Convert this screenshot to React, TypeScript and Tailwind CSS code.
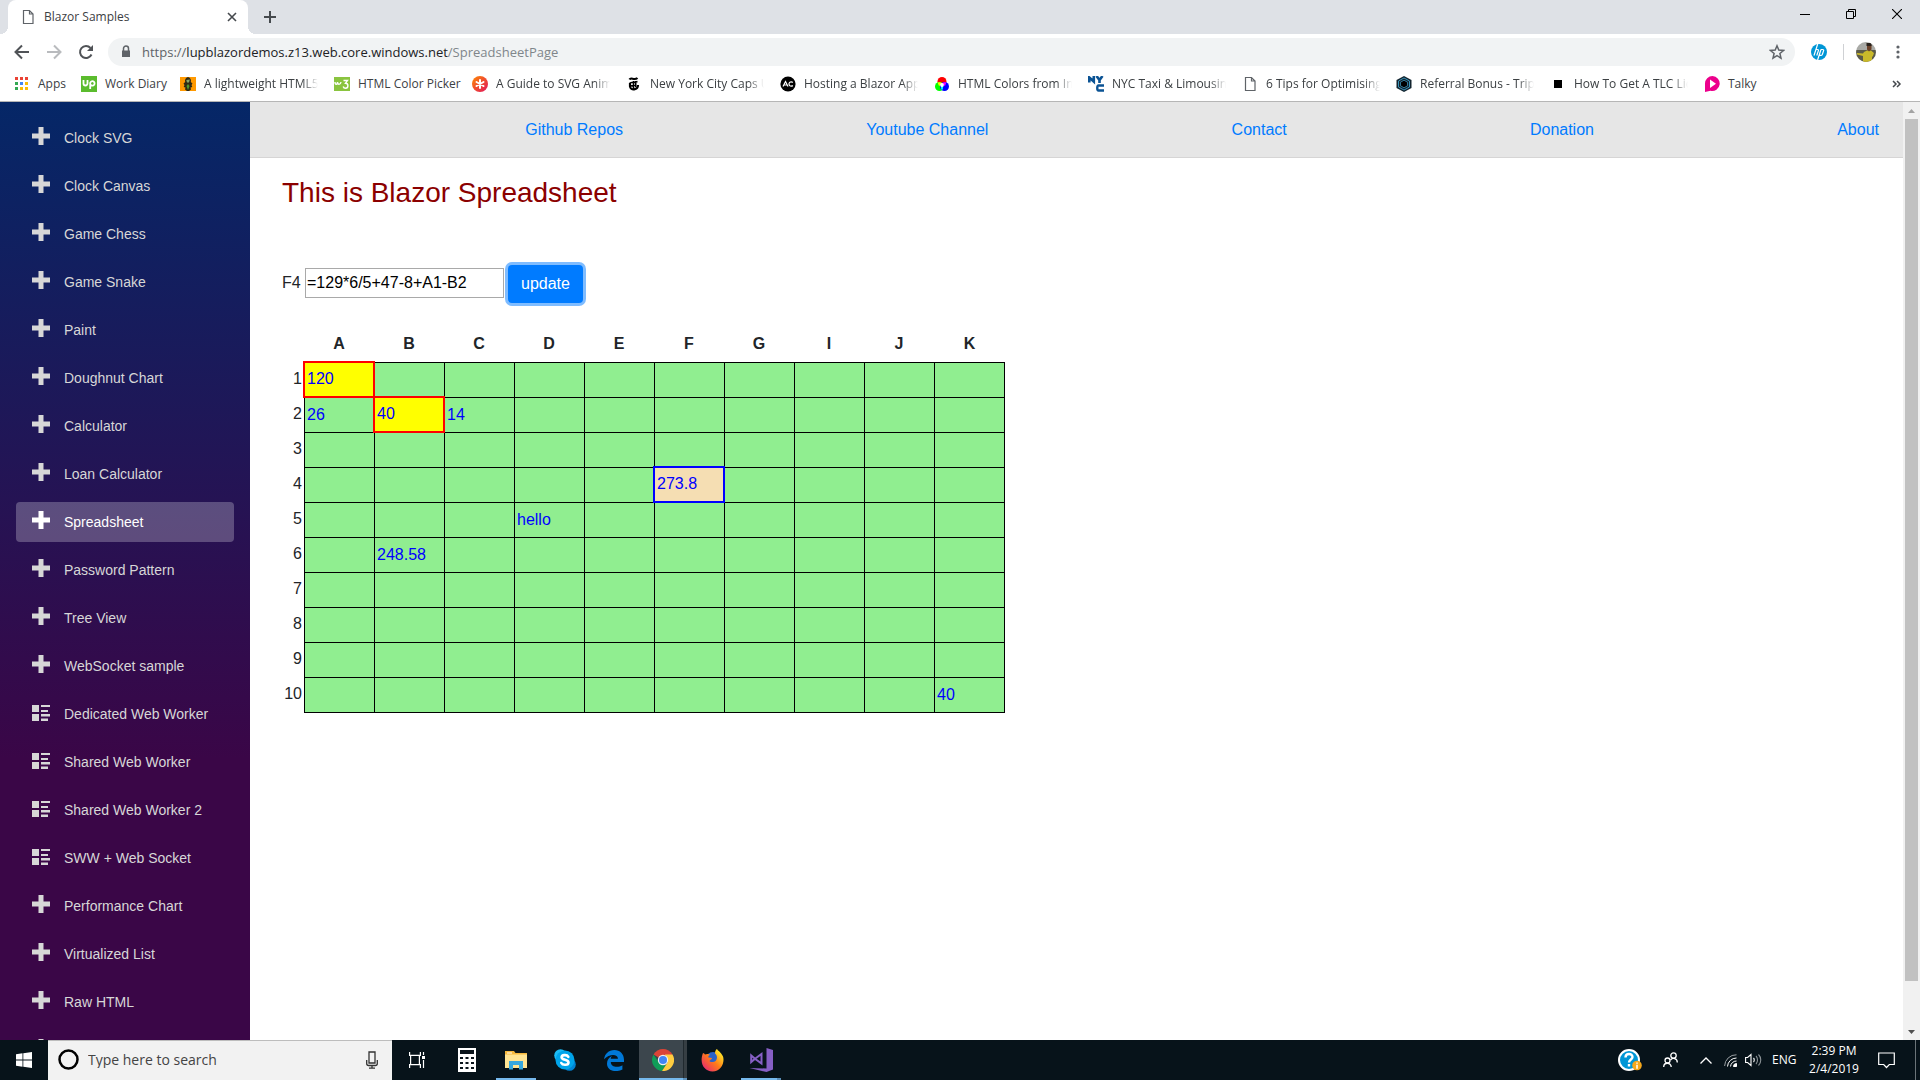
import React from "react";

const plusItems = (names: string[]) => names.map((name) => ({ name, icon: "plus" }));
const listItems = (names: string[]) => names.map((name) => ({ name, icon: "list" }));

const navItems = [
  ...plusItems([
    "Clock SVG", "Clock Canvas", "Game Chess", "Game Snake", "Paint", "Doughnut Chart", "Calculator",
    "Loan Calculator", "Spreadsheet", "Password Pattern", "Tree View", "WebSocket sample",
  ]),
  ...listItems(["Dedicated Web Worker", "Shared Web Worker", "Shared Web Worker 2", "SWW + Web Socket"]),
  ...plusItems(["Performance Chart", "Virtualized List", "Raw HTML", ""]),
];

const PageIcon = () => (
  <svg width="16" height="16" viewBox="0 0 16 16" fill="none" stroke="#5f6368" strokeWidth="1.200">
    <path d="M3.500 1.500h6l3.500 3.500v9.500h-9.500zM9.500 1.500v3.500h3.500" />
  </svg>
);

const bookmarks: { label: string; width: string; icon: React.ReactNode; fade?: boolean }[] = [
  {
    label: "Apps",
    width: "w-[67px]",
    icon: (
      <svg width="16" height="16" viewBox="0 0 16 16">
        <path fill="#ea4335" d="M1 1h3v3H1zM6 1h3v3H6zM11 1h3v3h-3z" />
        <path fill="#34a853" d="M1 6h3v3H1zM1 11h3v3H1z" />
        <path fill="#4285f4" d="M6 6h3v3H6z" />
        <path fill="#fbbc05" d="M11 6h3v3h-3zM6 11h3v3H6zM11 11h3v3h-3z" />
      </svg>
    ),
  },
  {
    label: "Work Diary",
    width: "w-[99px]",
    icon: (
      <svg width="16" height="16" viewBox="0 0 16 16">
        <path fill="#5bbc2e" d="M0 0h16v16H0z" />
        <path fill="none" stroke="#fff" strokeWidth="1.800" d="M2.500 4v3.500a2 2 0 0 0 4 0V4M9.200 13V7a2.200 2.200 0 1 1 .5 1.800" />
      </svg>
    ),
  },
  {
    label: "A lightweight HTML5",
    width: "w-[154px]",
    fade: true,
    icon: (
      <svg width="16" height="16" viewBox="0 0 16 16">
        <path fill="#f90" d="M0 1h16v14H0z" />
        <path fill="#2f2a14" d="M8 1c2.500.5 3.500 3 2.800 5l1.700 1.500-1 1.500.8 2-1.800.5.500 2L9 15H7l-2-1.500.5-2-1.800-.5.800-2-1-1.500L5.200 6C4.500 4 5.500 1.500 8 1z" />
        <path fill="#8aa86a" d="M6.300 4L9.800 3.500 9 6.500H7z" />
        <path fill="#4f9a2f" d="M8 8l1.500 2L8 14l-1.500-4z" />
      </svg>
    ),
  },
  {
    label: "HTML Color Picker",
    width: "w-[138px]",
    icon: (
      <svg width="16" height="16" viewBox="0 0 16 16">
        <path fill="#8ac43f" d="M0 1h16v14H0z" />
        <path fill="none" stroke="#fff" strokeWidth="1.400" d="M1 6c0 3 2.500 3 2.500 0 0 3 3 3 3.500 0M9.500 4.500h4l-2 2.700c3.200 0 3.200 5 0 5-1.200 0-2-.6-2.300-1.700" />
      </svg>
    ),
  },
  {
    label: "A Guide to SVG Anim",
    width: "w-[154px]",
    fade: true,
    icon: (
      <svg width="16" height="16" viewBox="0 0 16 16">
        <defs>
          <linearGradient id="css" x1="0" x2="1" y2="1"><stop stopColor="#ff8a00" /><stop offset="1" stopColor="#e0115f" /></linearGradient>
        </defs>
        <circle cx="8" cy="8" r="8" fill="url(#css)" />
        <path stroke="#fff" strokeWidth="2" strokeLinecap="round" d="M8 4v8M4.500 6l7 4M11.500 6l-7 4" />
      </svg>
    ),
  },
  {
    label: "New York City Caps U",
    width: "w-[154px]",
    fade: true,
    icon: (
      <svg width="16" height="16" viewBox="0 0 16 16" fill="none" stroke="#000">
        <path strokeWidth="2.200" d="M3.500 3.500C5 .5 8 5 11.500 2M12 9c0 5-7.500 6-8 1.500V7" />
        <path strokeWidth="1.600" d="M3.500 7.500c2-2 4.500-.5 8-2M7.500 5v8M9.700 5v6M5 10l5-1.500" />
      </svg>
    ),
  },
  {
    label: "Hosting a Blazor App",
    width: "w-[154px]",
    fade: true,
    icon: (
      <svg width="16" height="16" viewBox="0 0 16 16">
        <circle cx="8" cy="8" r="7.600" />
        <path fill="none" stroke="#fff" strokeWidth="1.200" d="M3 10.500L5.500 5.500 8 10.500M4 9h3M12.800 6.500a2.200 2.200 0 1 0 0 3" />
      </svg>
    ),
  },
  {
    label: "HTML Colors from Im",
    width: "w-[154px]",
    fade: true,
    icon: (
      <svg width="16" height="16" viewBox="0 0 16 16">
        <circle cx="8" cy="5.500" r="4.500" fill="#f00" />
        <circle cx="5.500" cy="10.500" r="4.500" fill="#0f0" />
        <circle cx="10.500" cy="10.500" r="4.500" fill="#00f" />
        <path fill="#ff0" d="M3.700 6.500A4.500 4.500 0 0 1 8 7v1L5 10z" />
        <path fill="#f0f" d="M12.300 6.500A4.500 4.500 0 0 0 8 7v1l3 2z" />
        <path fill="#0ff" d="M8 14.200a4.500 4.500 0 0 1 0-5.500 4.500 4.500 0 0 1 0 5.500z" />
        <circle cx="8" cy="9" r="1.900" fill="#fff" />
      </svg>
    ),
  },
  {
    label: "NYC Taxi & Limousine",
    width: "w-[154px]",
    fade: true,
    icon: (
      <svg width="16" height="16" viewBox="0 0 16 16" fill="none" stroke="#0b5394" strokeWidth="2.600">
        <path d="M1.300 6.500V1.500L5.800 5.500V0M8.500 0l3 4 3-4M11.500 3v4M16 9.500h-5.500c-1.500 0-1.500 5 0 5H16" />
      </svg>
    ),
  },
  { label: "6 Tips for Optimising", width: "w-[154px]", fade: true, icon: <PageIcon /> },
  {
    label: "Referral Bonus - Triple",
    width: "w-[154px]",
    fade: true,
    icon: (
      <svg width="16" height="16" viewBox="0 0 16 16">
        <path fill="#12242f" d="M8 0l7.500 4v8L8 16 .5 12V4z" />
        <path fill="none" stroke="#3a93b8" d="M8 2l5.500 3v6L8 14l-5.500-3V5z" />
        <path fill="#000" stroke="#3a93b8" strokeWidth=".8" d="M8 4.200l3.500 2v3.600L8 11.800l-3.500-2V6.200z" />
      </svg>
    ),
  },
  {
    label: "How To Get A TLC Lic",
    width: "w-[154px]",
    fade: true,
    icon: <svg width="16" height="16" viewBox="0 0 16 16"><path d="M4 4h8v8H4z" /></svg>,
  },
  {
    label: "Talky",
    width: "w-[70px]",
    icon: (
      <svg width="16" height="16" viewBox="0 0 16 16">
        <path fill="#ec008c" d="M8.500 0a7.500 7.500 0 1 1-2 14.800L1 16V7.500A7.500 7.500 0 0 1 8.500 0z" />
        <path fill="#fff" d="M6 3.500l6 4.300-6 4.300z" />
      </svg>
    ),
  },
];

const columns = ["A", "B", "C", "D", "E", "F", "G", "I", "J", "K"];
const rows = [1, 2, 3, 4, 5, 6, 7, 8, 9, 10];
const values: Record<string, string> = {
  A1: "120", A2: "26", B2: "40", C2: "14", F4: "273.8", D5: "hello", B6: "248.58", K10: "40",
};
const marks: Record<string, string> = {
  A1: "border-[#ff0000] bg-[#ffff00]",
  B2: "border-[#ff0000] bg-[#ffff00]",
  F4: "border-[#0000ff] bg-[#f5deb3]",
};

function TabStrip() {
  return (
    <div className="flex h-[34px] shrink-0 bg-[#dee1e6] pl-2">
      <div className="relative flex w-60 items-center rounded-t-lg bg-white pr-2 pl-3">
        <span className="absolute bottom-0 -left-2 size-2 bg-[radial-gradient(circle_at_0_0,#dee1e6_8px,#fff_8px)]" />
        <span className="absolute -right-2 bottom-0 size-2 bg-[radial-gradient(circle_at_100%_0,#dee1e6_8px,#fff_8px)]" />
        <PageIcon />
        <span className="ml-2 grow text-[#3c4043]">Blazor Samples</span>
        <button aria-label="Close tab" className="grid size-4 place-items-center">
          <svg width="10" height="10" viewBox="0 0 10 10" stroke="#45494d" strokeWidth="1.600"><path d="M1 1l8 8M9 1l-8 8" /></svg>
        </button>
      </div>
      <button aria-label="New tab" className="ml-4 self-center">
        <svg width="12" height="12" viewBox="0 0 12 12" stroke="#45494d" strokeWidth="2"><path d="M6 0v12M0 6h12" /></svg>
      </button>
      <div className="ml-auto flex h-7">
        <button aria-label="Minimize" className="grid w-[46px] place-items-center">
          <svg width="10" height="10" viewBox="0 0 10 10" stroke="#000"><path d="M0 5.500h10" /></svg>
        </button>
        <button aria-label="Restore" className="grid w-[46px] place-items-center">
          <svg width="10" height="10" viewBox="0 0 10 10" stroke="#000" fill="none"><path d="M.5 2.500h7v7h-7zM2.500 2.500v-2h7v7h-2" /></svg>
        </button>
        <button aria-label="Close" className="grid w-[46px] place-items-center">
          <svg width="10" height="10" viewBox="0 0 10 10" stroke="#000" strokeWidth="1.100"><path d="M0 0l10 10M10 0L0 10" /></svg>
        </button>
      </div>
    </div>
  );
}

function Toolbar() {
  return (
    <div className="flex h-9 shrink-0 items-center gap-4 pr-4 pl-3.5">
      <button aria-label="Back">
        <svg width="16" height="16" viewBox="0 0 16 16" fill="none" stroke="#505357" strokeWidth="2"><path d="M15 8H2M8 1.500L1.500 8 8 14.500" /></svg>
      </button>
      <button aria-label="Forward">
        <svg width="16" height="16" viewBox="0 0 16 16" fill="none" stroke="#b9bbbe" strokeWidth="2"><path d="M1 8h13M8 1.500L14.500 8 8 14.500" /></svg>
      </button>
      <button aria-label="Reload">
        <svg width="16" height="16" viewBox="0 0 16 16" fill="none" stroke="#505357" strokeWidth="2">
          <path d="M13.500 10.500A6 6 0 1 1 12.500 4" />
          <path fill="#505357" stroke="none" d="M15 1v6H9z" />
        </svg>
      </button>
      <div className="-ml-0.5 flex h-7 grow items-center rounded-full bg-[#f1f3f4] pr-2.5 pl-3">
        <svg width="12" height="14" viewBox="0 0 12 14"><path fill="#5f6368" d="M2 5.500h8V12H2z" /><path fill="none" stroke="#5f6368" strokeWidth="1.500" d="M3.500 6V3.500a2.500 2.500 0 0 1 5 0V6" /></svg>
        <div role="textbox" aria-label="Address" className="ml-2.5 grow text-[13px] text-[#80868b]">
          <span className="text-[#5f6368]">https://</span>
          <span className="text-[#202124]">lupblazordemos.z13.web.core.windows.net</span>/SpreadsheetPage
        </div>
        <button aria-label="Bookmark this page">
          <svg width="16" height="16" viewBox="0 0 16 16" fill="none" stroke="#5f6368" strokeWidth="1.500"><path d="M8 1.800l1.800 4.300 4.700.4-3.600 3 1.100 4.600L8 11.700l-4 2.400 1.100-4.600-3.600-3 4.700-.4z" /></svg>
        </button>
      </div>
      <button aria-label="HP extension">
        <svg width="16" height="16" viewBox="0 0 16 16">
          <circle cx="8" cy="8" r="8" fill="#0096d6" />
          <path fill="none" stroke="#fff" strokeWidth="1.200" d="M6.700 0L3 11.500M4.800 5.500h1.700c.8 0 1.100.4.900 1.100l-1.600 4.900M10 5.500L6.600 16M9.900 5.500h1.800c.8 0 1.100.4.900 1.100l-1.200 3.700c-.2.700-.6 1-1.200 1H8.200" />
        </svg>
      </button>
      <span className="h-4 w-px bg-[#cfd1d4]" />
      <button aria-label="Profile" className="-ml-1">
        <svg width="20" height="20" viewBox="0 0 20 20">
          <defs><clipPath id="face"><circle cx="10" cy="10" r="10" /></clipPath></defs>
          <g clipPath="url(#face)">
            <path fill="#a9aaa6" d="M0 0h20v9H0z" />
            <path fill="#5b5a48" d="M0 8h20v12H0z" />
            <path fill="#c9b92a" d="M8 10l3-1.500h4l3 2.500-1 3-1 1v5H7v-6l-6-1.500v-1.500l6 .5z" />
            <path fill="#6b4129" d="M11 3h4.500v4.500L13 9.500l-2-2z" />
            <path fill="#2a211b" d="M10.500 1h5v3h-5z" />
          </g>
        </svg>
      </button>
      <button aria-label="Menu" className="grid w-3 place-items-center">
        <svg width="4" height="14" viewBox="0 0 4 14" fill="#5f6368"><circle cx="2" cy="2" r="1.600" /><circle cx="2" cy="7" r="1.600" /><circle cx="2" cy="12" r="1.600" /></svg>
      </button>
    </div>
  );
}

function BookmarksBar() {
  return (
    <div className="flex h-8 shrink-0 items-center border-b border-[#b6b6b6] pb-1 pl-3.5 text-[#3c4043]">
      {bookmarks.map((b) => (
        <a key={b.label} href="#" className={`flex shrink-0 items-center gap-2 ${b.width}`}>
          <span className="shrink-0">{b.icon}</span>
          <span
            className={
              b.fade
                ? "w-[114px] overflow-hidden whitespace-nowrap [mask-image:linear-gradient(to_right,#000_86%,transparent)]"
                : "whitespace-nowrap"
            }
          >
            {b.label}
          </span>
        </a>
      ))}
      <button aria-label="More bookmarks" className="mr-4.5 ml-auto">
        <svg width="10" height="8" viewBox="0 0 10 8" fill="none" stroke="#45494d" strokeWidth="1.500"><path d="M1 1l3 3-3 3M5 1l3 3-3 3" /></svg>
      </button>
    </div>
  );
}

function Sidebar() {
  return (
    <nav className="flex w-[250px] shrink-0 flex-col gap-2 overflow-hidden bg-[linear-gradient(180deg,rgb(5,39,103)_0%,#3a0647_70%)] px-4 pt-4 font-['Liberation_Sans',Arial,sans-serif] text-[14px] text-[#d7d7d7]">
      {navItems.map((item) => (
        <a
          key={item.name}
          href="#"
          className={`flex h-10 shrink-0 items-center gap-3.5 rounded px-4 ${
            item.name === "Spreadsheet" ? "bg-white/25 text-white" : ""
          }`}
        >
          <svg width="18" height="18" viewBox="0 0 18 18" fill="currentColor" className="mb-1 shrink-0">
            {item.icon === "plus" ? (
              <path d="M6.500 0h5v6.500H18v5h-6.500V18h-5v-6.500H0v-5h6.500z" />
            ) : (
              <path d="M0 2h7v7H0zM0 11h7v7H0zM9 2h9v2H9zM9 7h7v2H9zM9 11h9v2.500H9zM9 15.500h7V18H9z" />
            )}
          </svg>
          <span>{item.name}</span>
        </a>
      ))}
    </nav>
  );
}

function Sheet() {
  return (
    <table className="mt-5 border-separate border-spacing-0">
      <thead>
        <tr className="h-[39px]">
          <td className="w-[22px]" />
          {columns.map((c) => (
            <th key={c} scope="col" className="pt-0.5 text-center align-middle font-bold">{c}</th>
          ))}
        </tr>
      </thead>
      <tbody>
        {rows.map((r) => (
          <tr key={r}>
            <th scope="row" className="w-[22px] pr-0.5 pb-0.5 text-right font-normal">{r}</th>
            {columns.map((c) => {
              const id = c + r;
              return (
                <td
                  key={c}
                  className={`relative border-t border-l border-black bg-[#90ee90] p-0 pl-0.5 text-[#0000ff] ${
                    c === "K" ? "w-[71px] border-r" : "w-[70px]"
                  } ${r === 10 ? "h-9 border-b" : "h-[35px]"}`}
                >
                  {marks[id] ? (
                    <div className={`absolute -top-0.5 -right-px -bottom-px -left-0.5 z-10 flex items-center border-2 pb-0.5 pl-0.5 ${marks[id]}`}>
                      {values[id]}
                    </div>
                  ) : (
                    values[id]
                  )}
                </td>
              );
            })}
          </tr>
        ))}
      </tbody>
    </table>
  );
}

function Page() {
  return (
    <main className="flex min-w-0 grow flex-col font-['Liberation_Sans',Arial,sans-serif] text-[16px] leading-6 text-[#212529]">
      <div className="flex h-14 shrink-0 items-center justify-between border-b border-[#d6d5d5] bg-[#e6e6e6] pr-6 pl-8 text-[#007bff]">
        <span />
        {["Github Repos", "Youtube Channel", "Contact", "Donation", "About"].map((l) => (
          <a key={l} href="#">{l}</a>
        ))}
      </div>
      <div className="px-8 pt-[18px]">
        <h3 className="text-[28px] leading-[34px] text-[#8b0000]">This is Blazor Spreadsheet</h3>
        <div className="mt-[55px] flex items-center">
          <label htmlFor="formula" className="w-[23px] pb-0.5">F4</label>
          <input id="formula" defaultValue="=129*6/5+47-8+A1-B2" className="mb-0.5 h-[30px] w-[199px] border border-[#a9a9a9] px-px text-black" />
          <button className="ml-1 h-[38px] rounded bg-[#007bff] px-[13px] text-white ring-3 ring-[#007bff]/50">update</button>
        </div>
        <Sheet />
      </div>
    </main>
  );
}

function Scrollbar() {
  return (
    <div className="flex w-[17px] shrink-0 flex-col items-center bg-[#f1f1f1]">
      <svg width="17" height="17" viewBox="0 0 17 17"><path fill="#a3a3a3" d="M5 11l3.500-4 3.500 4z" /></svg>
      <div className="h-[862px] w-[13px] bg-[#c1c1c1]" />
      <svg width="17" height="17" viewBox="0 0 17 17" className="mt-auto"><path fill="#505050" d="M5 7l3.500 4L12 7z" /></svg>
    </div>
  );
}

const apps = [
  {
    name: "Task View",
    wide: true,
    icon: (
      <svg width="16" height="16" viewBox="0 0 16 16" fill="none" stroke="#fff" strokeWidth="1.200">
        <path d="M.6 0v3.400h10.800V0M.6 16v-3.400h10.800V16M1.600 3.400v9.200M10.400 3.400v9.200M14.500 0v3M14.500 8v8" />
        <path fill="#fff" stroke="none" d="M13 4h3v3h-3z" />
      </svg>
    ),
  },
  {
    name: "Calculator",
    icon: (
      <svg width="18" height="24" viewBox="0 0 18 24">
        <path fill="#fff" d="M0 0h18v24H0z" />
        <path fill="#0a141b" d="M2 2h14v4H2zM2 9h3v2H2zM7.500 9h3v2h-3zM13 9h3v2h-3zM2 14h3v2H2zM7.500 14h3v2h-3zM13 14h3v2h-3zM2 19h3v2H2zM7.500 19h3v2h-3zM13 19h3v2h-3z" />
      </svg>
    ),
  },
  {
    name: "File Explorer",
    line: "w-10",
    icon: (
      <svg width="22" height="19" viewBox="0 0 22 19">
        <path fill="#f5b83d" d="M0 0h9l1.500 2H22v4H0z" />
        <path fill="#fff" d="M2 1.500h5v1H2z" />
        <path fill="#ffe493" d="M0 3.500h22V17H0z" />
        <path fill="#35a7de" d="M4 10h14v8.500h-4V14H8v4.500H4z" />
      </svg>
    ),
  },
  {
    name: "Skype",
    icon: (
      <svg width="22" height="22" viewBox="0 0 22 22">
        <circle cx="6.500" cy="6.500" r="6.300" fill="#1bbcf5" /><circle cx="15.500" cy="15.500" r="6.300" fill="#0084d4" /><circle cx="11" cy="11" r="9.500" fill="#00a4ea" />
        <path fill="none" stroke="#fff" strokeWidth="2.600" strokeLinecap="round" d="M14.300 7.800C13 5.300 7.500 5.600 7.600 8.400c.1 2.900 6.900 1.900 6.900 5 0 3-5.800 3.200-7.200.6" />
      </svg>
    ),
  },
  {
    name: "Edge",
    icon: (
      <svg width="20" height="21" viewBox="0 0 20 21">
        <path fill="#0078d7" d="M0 9.300C.8 4 4.500 0 10.400 0 16 0 20 4 20 9.800V12H6.800c.1 5.500 7.500 5.800 11.600 3.200v4.300C12.500 22.600 3 21.500 3 13.500c0-3.700 2-6 5-7.500-.8.900-1.100 1.700-1.300 2.700h7.200C14 3.500 5 3.600 0 9.300z" />
      </svg>
    ),
  },
  {
    name: "Chrome",
    active: true,
    line: "inset-x-0",
    icon: (
      <svg width="22" height="22" viewBox="0 0 22 22">
        <path fill="#db4437" d="M11 11L1.500 5.500a11 11 0 0 1 19 0z" />
        <path fill="#0f9d58" d="M1.500 5.500A11 11 0 0 0 10 22l5-8.500H7z" />
        <path fill="#ffcd40" d="M20.500 5.500A11 11 0 0 1 10 22l5.500-8.500L13 5.500z" />
        <circle cx="11" cy="11" r="5.200" fill="#f1f1f1" /><circle cx="11" cy="11" r="4" fill="#4285f4" />
      </svg>
    ),
  },
  {
    name: "Firefox",
    icon: (
      <svg width="23" height="23" viewBox="0 0 23 23">
        <defs>
          <linearGradient id="fox" x1="1" x2="0" y2="1"><stop offset=".15" stopColor="#ffe226" /><stop offset=".5" stopColor="#ff7a18" /><stop offset="1" stopColor="#e31587" /></linearGradient>
        </defs>
        <circle cx="12" cy="10.500" r="7.500" fill="#2a62c9" />
        <path fill="url(#fox)" d="M2 4c1 0 1.500 1 2 1.500C6 4.500 8 5 9 6c-1.500.5-2 1.500-1.500 2.500l3.500.5c0 1.500-2 1.700-2.500 3 1 2 5 1 6.500-.5 2-3 .5-6-1-7 0-2 .5-3.500 2-4.500 1 2 4 3 6 7.500 2 6-2 15-10.500 15C3 22.500-2 14 2 4z" />
      </svg>
    ),
  },
  {
    name: "Visual Studio",
    line: "w-10",
    icon: (
      <svg width="24" height="24" viewBox="0 0 24 24">
        <path fill="#865fc5" d="M17.500 0L24 2v19.500L17.500 24 .5 20l17 .5z" />
        <path fill="none" stroke="#865fc5" strokeWidth="2" d="M2.200 7.500v6.500l3.800-3.200zM6 10.800L12.500 6v9.500z" />
      </svg>
    ),
  },
];

function Taskbar() {
  return (
    <footer className="flex h-10 shrink-0 items-stretch bg-[#07131a] text-white">
      <button aria-label="Start" className="grid w-12 place-items-center">
        <svg width="16" height="16" viewBox="0 0 16 16" fill="#fff"><path d="M0 2.200L6.500 1.300v6.200H0zM7.300 1.200L16 0v7.500H7.300zM0 8.400h6.500v6.300L0 13.800zM7.300 8.400H16V16l-8.700-1.200z" /></svg>
      </button>
      <div className="flex w-[344px] items-center border-t border-[#bdbdbd] bg-[#f2f2f2] pr-3.5 pb-0.5 pl-2.5">
        <svg width="21" height="21" viewBox="0 0 21 21" fill="none" stroke="#000" strokeWidth="2.500"><circle cx="10.500" cy="10.500" r="9" /></svg>
        <input aria-label="Search" placeholder="Type here to search" className="ml-[9px] min-w-0 grow text-[14px] placeholder:text-[#444]" />
        <svg width="12" height="18" viewBox="0 0 12 18" fill="none" stroke="#333" strokeWidth="1.300"><path d="M3 1h6v11H3zM.7 9v3.500a2 2 0 0 0 2 2h6.600a2 2 0 0 0 2-2V9M6 14.500V17M3 17.200h6" /></svg>
      </div>
      {apps.map((a) => (
        <button
          key={a.name}
          aria-label={a.name}
          className={`relative mr-px grid place-items-center ${a.wide ? "w-[50px]" : "w-12"} ${
            a.active ? "bg-[linear-gradient(to_right,#3c464d_44px,#20292e_44px,#20292e_45px,#363e43_45px)]" : ""
          }`}
        >
          {a.icon}
          {a.line && (
            <span className={`absolute bottom-0 h-0.5 ${a.line} ${a.name === "File Explorer" ? "bg-[#76b9ed]" : "bg-[linear-gradient(to_left,#5b8fb9_4px,#76b9ed_4px)]"}`} />
          )}
        </button>
      ))}
      <div className="ml-auto flex items-center">
        <svg width="24" height="22" viewBox="0 0 24 22">
          <circle cx="11" cy="11" r="10" fill="#0096d6" stroke="#fff" strokeWidth="2" />
          <path fill="none" stroke="#fff" strokeWidth="2.400" d="M7.500 8.500c0-4.500 7-4.500 7-.5 0 2.500-3.500 2.500-3.500 5.500M11 15v2.500" />
          <circle cx="19" cy="16.500" r="4.800" fill="#f5a81c" /><path stroke="#fff" strokeWidth="1.500" d="M19 13.500v1.300M19 15.700v4" />
        </svg>
        <svg width="15" height="16" viewBox="0 0 15 16" fill="none" stroke="#fff" strokeWidth="1.300" className="ml-[21px]">
          <circle cx="10.500" cy="3.500" r="2.700" /><circle cx="4.500" cy="8.500" r="2.500" /><path d="M.7 15c0-5 7.500-5 7.500 0M7.500 8c2-2.500 6.800-2 6.800 2.500" />
        </svg>
        <svg width="12" height="7" viewBox="0 0 12 7" fill="none" stroke="#fff" strokeWidth="1.300" className="ml-[22px]"><path d="M.5 6.500L6 1l5.500 5.500" /></svg>
        <svg width="13" height="13" viewBox="0 0 13 13" fill="none" stroke="#fff" className="ml-3">
          <path stroke="#9aa0a4" d="M.6 12A11.500 11.500 0 0 1 12.500.8" /><path d="M3.500 12.500a9 9 0 0 1 9-8.500M6.500 12.500a6 6 0 0 1 6-5.500" /><path fill="#fff" d="M9.500 12.500a3 3 0 0 1 3-3v3z" />
        </svg>
        <svg width="17" height="14" viewBox="0 0 17 14" fill="none" stroke="#fff" strokeWidth="1.100" className="ml-2">
          <path d="M.6 4.500h2L6 1.500v11L2.600 9.500h-2zM8.500 5c1 1 1 3 0 4" /><path stroke="#8b9296" d="M11 3c2 2 2 6 0 8M13.500 1.500c3 3 3 8 0 11" />
        </svg>
        <span className="ml-2.5 w-6">ENG</span>
        <div className="ml-2.5 w-14 text-center leading-[18px]">
          <div>2:39 PM</div>
          <div>2/4/2019</div>
        </div>
        <svg width="17" height="17" viewBox="0 0 17 17" fill="none" stroke="#fff" strokeWidth="1.200" className="mr-5 ml-4"><path d="M.7 1h15.600v11.500h-5L8.500 15.500l-2.800-3h-5z" /></svg>
        <span className="mr-1 h-10 w-px bg-[#6b7479]" />
      </div>
    </footer>
  );
}

export default function App() {
  return (
    <div className="flex h-screen flex-col overflow-hidden bg-white font-['Open_Sans',sans-serif] text-[12px] leading-4">
      <TabStrip />
      <Toolbar />
      <BookmarksBar />
      <div className="flex min-h-0 grow">
        <Sidebar />
        <Page />
        <Scrollbar />
      </div>
      <Taskbar />
    </div>
  );
}
